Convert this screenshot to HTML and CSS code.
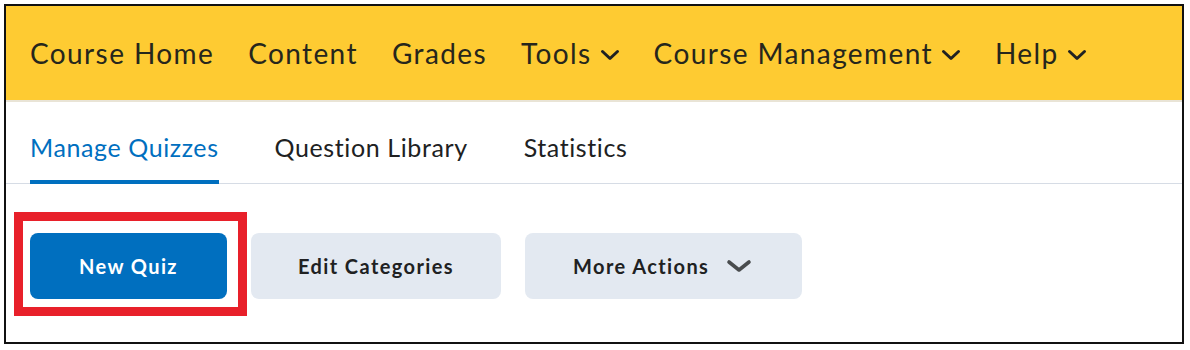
FILE: index.html
```html
<!DOCTYPE html>
<html lang="en">
<head>
  <meta charset="UTF-8">
  <meta name="viewport" content="width=device-width, initial-scale=1.0">
  <title>Manage Quizzes</title>
  <link rel="stylesheet" href="styles.css">
</head>
<body>
  <div class="frame">
    <nav class="course-nav">
      <a class="nav-item" href="#">Course Home</a>
      <a class="nav-item" href="#">Content</a>
      <a class="nav-item" href="#">Grades</a>
      <a class="nav-item" href="#">Tools
        <svg class="chev" viewBox="0 0 20 12"><path d="M2.5 2.5L10 9.5L17.5 2.5" /></svg>
      </a>
      <a class="nav-item" href="#">Course Management
        <svg class="chev" viewBox="0 0 20 12"><path d="M2.5 2.5L10 9.5L17.5 2.5" /></svg>
      </a>
      <a class="nav-item" href="#">Help
        <svg class="chev" viewBox="0 0 20 12"><path d="M2.5 2.5L10 9.5L17.5 2.5" /></svg>
      </a>
    </nav>

    <div class="tabs">
      <a class="tab active" href="#">Manage Quizzes</a>
      <a class="tab" href="#">Question Library</a>
      <a class="tab" href="#">Statistics</a>
    </div>

    <div class="actions">
      <button class="btn primary highlighted" type="button">New Quiz</button>
      <button class="btn" type="button">Edit Categories</button>
      <button class="btn more" type="button">More Actions
        <svg class="chev-btn" viewBox="0 0 26 14"><path d="M3 3L13 11L23 3" /></svg>
      </button>
    </div>
  </div>
</body>
</html>
```

FILE: styles.css
```css
body {
  margin: 0;
  font-family: Lato, "Open Sans", sans-serif;
  color: #202122;
  background: #fff;
}

.frame {
  margin: 4px;
  width: 1176px;
  height: 336px;
  border: 2px solid #111;
  overflow: hidden;
}

/* Yellow course navigation */
.course-nav {
  display: flex;
  align-items: center;
  gap: 34px;
  height: 94px;
  padding-left: 24px;
  background: #fecb32;
  border-bottom: 2px solid #e9e4d6;
}

.nav-item {
  display: flex;
  align-items: center;
  gap: 8px;
  font-size: 28px;
  letter-spacing: 1.4px;
  color: #26261c;
  text-decoration: none;
}

.chev {
  width: 20px;
  height: 12px;
  margin-top: 4px;
  fill: none;
  stroke: #202122;
  stroke-width: 3;
  stroke-linecap: round;
  stroke-linejoin: round;
}

/* Tool tabs */
.tabs {
  display: flex;
  gap: 56px;
  padding-left: 24px;
  border-bottom: 1px solid #d6dce5;
}

.tab {
  padding: 30px 0 18px;
  font-size: 25px;
  letter-spacing: 0.6px;
  color: #202122;
  text-decoration: none;
  border-bottom: 4px solid transparent;
  margin-bottom: -1px;
}

.tab.active {
  color: #006fbf;
  border-bottom-color: #006fbf;
}

/* Button row */
.actions {
  display: flex;
  gap: 24px;
  padding: 49px 0 0 24px;
}

.btn {
  position: relative;
  height: 66px;
  padding: 0 47px;
  border: none;
  border-radius: 8px;
  background: #e3e9f1;
  color: #202122;
  font-family: inherit;
  font-size: 20px;
  font-weight: bold;
  letter-spacing: 1.4px;
}

.btn.primary {
  width: 197px;
  padding: 0;
  background: #006fbf;
  color: #fff;
}

.btn.more {
  display: flex;
  align-items: center;
  gap: 17px;
  padding: 0 50px 0 48px;
}

.chev-btn {
  width: 26px;
  height: 14px;
  fill: none;
  stroke: #494c4e;
  stroke-width: 3.6;
  stroke-linecap: round;
  stroke-linejoin: round;
}

/* red annotation box around the button */
.highlighted::after {
  content: "";
  position: absolute;
  top: -21px;
  left: -16px;
  right: -20px;
  bottom: -17px;
  border: 9px solid #e8202a;
}
```
